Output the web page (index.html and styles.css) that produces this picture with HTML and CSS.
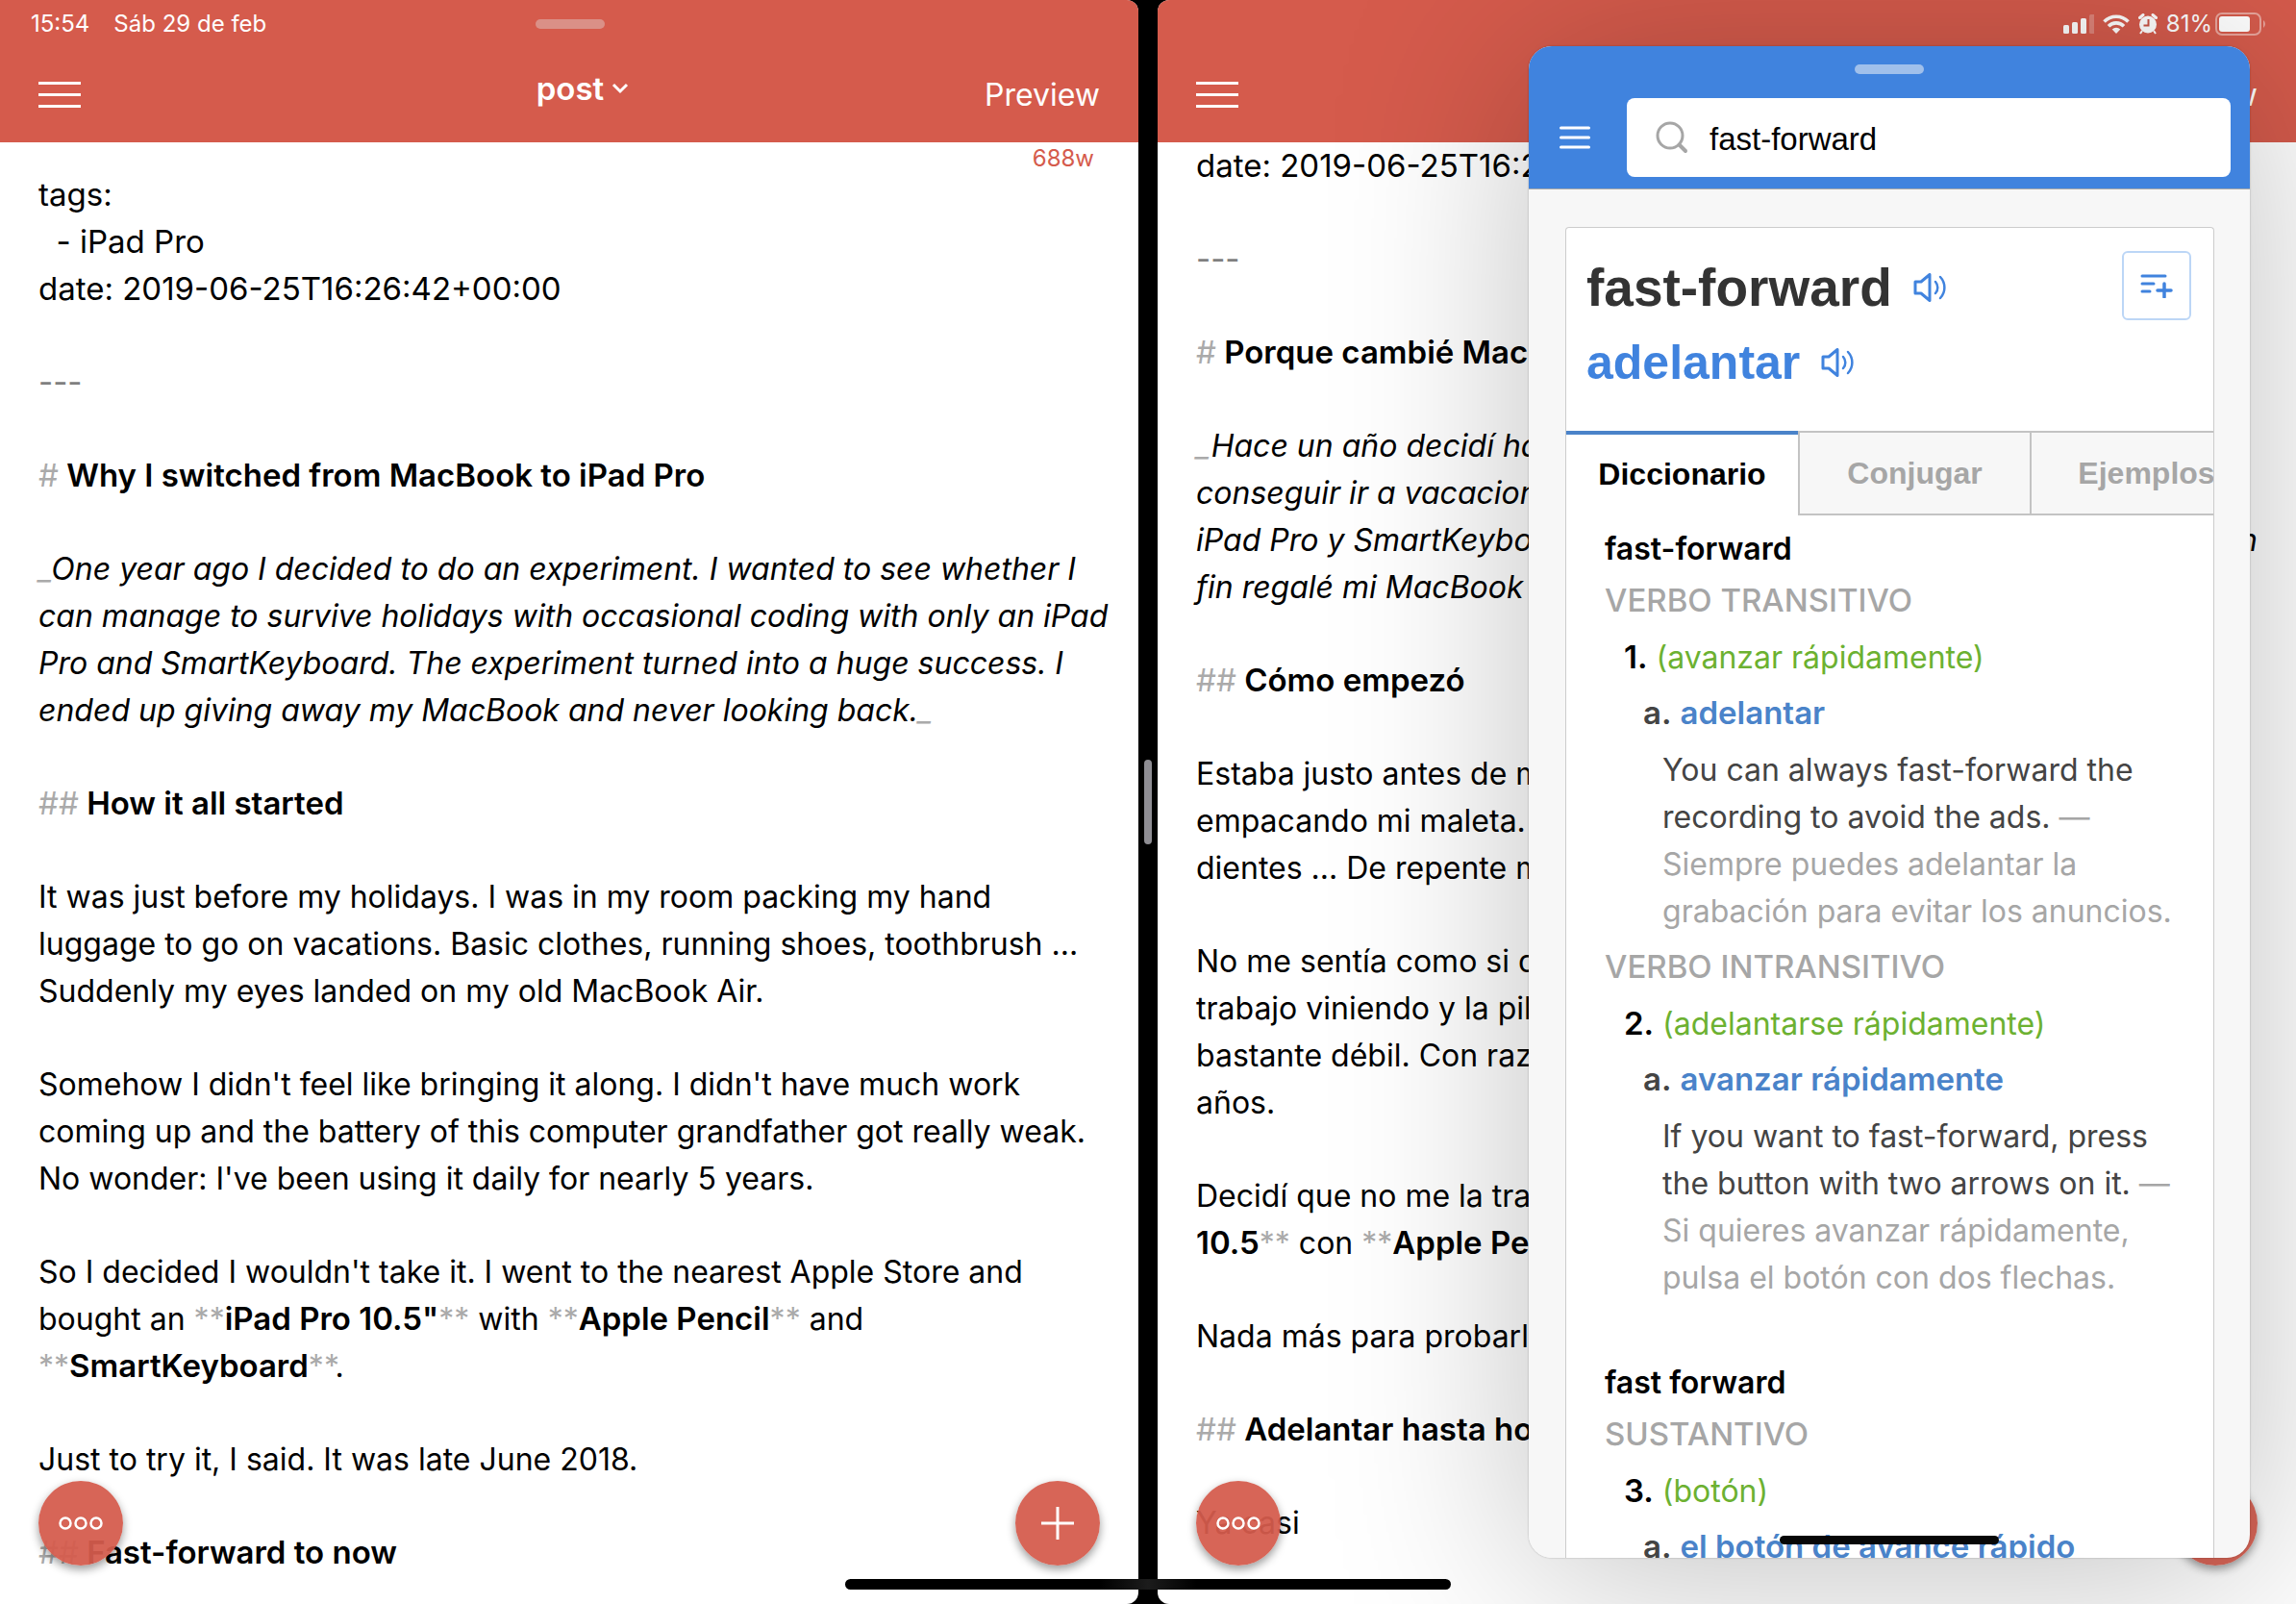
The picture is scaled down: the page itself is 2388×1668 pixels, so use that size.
FILE: index.html
```
<!DOCTYPE html>
<html lang="es">
<head>
<meta charset="utf-8">
<meta name="viewport" content="width=device-width, initial-scale=1">
<title>post</title>
<link rel="stylesheet" href="styles.css">
</head>
<body>
<main class="split">
  <section class="pane pane-left">
    <header class="pane-header">
      <div class="status">
        <div class="status-start"><span>15:54</span><span>Sáb 29 de feb</span></div>
        <span class="grabber"></span>
      </div>
      <nav class="toolbar">
        <button class="menu-button" type="button" aria-label="Menu">
          <svg width="44" height="28" viewBox="0 0 44 28"><path d="M0 2.500H44M0 14.500H44M0 26.500H44" stroke="#fff" stroke-width="3"/></svg>
        </button>
        <button class="doc-title" type="button">post
          <svg width="18" height="12" viewBox="0 0 18 12"><path d="M2 2l7 7 7-7" fill="none" stroke="#fff" stroke-width="3"/></svg>
        </button>
        <button class="preview" type="button">Preview</button>
      </nav>
    </header>
    <div class="editor">
      <span class="word-count">688w</span>
      <article class="document" lang="en">
        <p class="front">tags:
  - iPad Pro
date: 2019-06-25T16:26:42+00:00</p>
        <p class="rule">---</p>
        <h1><span class="mark">#</span> Why I switched from MacBook to iPad Pro</h1>
        <p><em><span class="mark">_</span>One year ago I decided to do an experiment. I wanted to see whether I
can manage to survive holidays with occasional coding with only an iPad
Pro and SmartKeyboard. The experiment turned into a huge success. I
ended up giving away my MacBook and never looking back.<span class="mark">_</span></em></p>
        <h2><span class="mark">##</span> How it all started</h2>
        <p>It was just before my holidays. I was in my room packing my hand
luggage to go on vacations. Basic clothes, running shoes, toothbrush ...
Suddenly my eyes landed on my old MacBook Air.</p>
        <p>Somehow I didn't feel like bringing it along. I didn't have much work
coming up and the battery of this computer grandfather got really weak.
No wonder: I've been using it daily for nearly 5 years.</p>
        <p>So I decided I wouldn't take it. I went to the nearest Apple Store and
bought an <span class="mark">**</span><strong>iPad Pro 10.5"</strong><span class="mark">**</span> with <span class="mark">**</span><strong>Apple Pencil</strong><span class="mark">**</span> and
<span class="mark">**</span><strong>SmartKeyboard</strong><span class="mark">**</span>.</p>
        <p>Just to try it, I said. It was late June 2018.</p>
        <h2><span class="mark">##</span> Fast-forward to now</h2>
      </article>
      <button class="fab fab-more" type="button" aria-label="More">
        <svg width="46" height="16" viewBox="0 0 46 16" fill="none" stroke="#fff" stroke-width="2.500"><circle cx="7" cy="8" r="5.500"/><circle cx="23" cy="8" r="5.500"/><circle cx="39" cy="8" r="5.500"/></svg>
      </button>
      <button class="fab fab-add" type="button" aria-label="Add">
        <svg width="34" height="34" viewBox="0 0 34 34"><path d="M17 0V34M0 17H34" stroke="#fff" stroke-width="3"/></svg>
      </button>
    </div>
  </section>

  <div class="divider"><span class="divider-handle"></span></div>

  <section class="pane pane-right">
    <header class="pane-header">
      <div class="status">
        <div class="status-end">
          <svg width="32" height="20" viewBox="0 0 32 20" fill="#fff"><rect y="11" width="6" height="9" rx="1.500"/><rect x="9" y="8" width="6" height="12" rx="1.500"/><rect x="18" y="4" width="6" height="16" rx="1.500"/><rect x="27" width="6" height="20" rx="1.500" opacity=".25"/></svg>
          <svg class="wifi" width="28" height="20" viewBox="0 0 28 20" fill="none" stroke="#fff" stroke-width="3.600"><path d="M1.500 7.500a17.500 17.500 0 0 1 25 0"/><path d="M6 12.200a11.300 11.300 0 0 1 16 0"/><path d="M14 20l-4.300-4.400a6 6 0 0 1 8.600 0z" fill="#fff" stroke="none"/></svg>
          <svg class="alarm" width="20" height="22" viewBox="0 0 20 22"><circle cx="10" cy="11.500" r="9" fill="#fff"/><path d="M1.500 4.500l3.500-3M18.500 4.500l-3.500-3" stroke="#fff" stroke-width="3" stroke-linecap="round"/><path d="M4 18l-2 3M16 18l2 3" stroke="#fff" stroke-width="2"/><path d="M10.500 6v6.500H5.500" fill="none" stroke="#c85546" stroke-width="2"/></svg>
          <span>81%</span>
          <svg class="battery" width="54" height="24" viewBox="0 0 54 24"><rect x="1" y="1" width="46" height="22" rx="6" fill="none" stroke="#fff" stroke-opacity=".45" stroke-width="2"/><rect x="4" y="4" width="32" height="16" rx="3" fill="#fff"/><path d="M50 8a5 5 0 0 1 0 8z" fill="#fff" opacity=".45"/></svg>
        </div>
      </div>
      <nav class="toolbar">
        <button class="menu-button" type="button" aria-label="Menú">
          <svg width="44" height="28" viewBox="0 0 44 28"><path d="M0 2.500H44M0 14.500H44M0 26.500H44" stroke="#fff" stroke-width="3"/></svg>
        </button>
        <span></span>
        <button class="preview" type="button">Preview</button>
      </nav>
    </header>
    <div class="editor">
      <article class="document">
        <p class="front">date: 2019-06-25T16:26:42+00:00</p>
        <p class="rule">---</p>
        <h1><span class="mark">#</span> Porque cambié MacBook</h1>
        <p><em><span class="mark">_</span>Hace un año decidí hacer
conseguir ir a vacaciones
<span class="spread"><span>iPad Pro y SmartKeyboard.</span><span>en</span></span>fin regalé mi MacBook</em></p>
        <h2><span class="mark">##</span> Cómo empezó</h2>
        <p>Estaba justo antes de mis
empacando mi maleta.
dientes ... De repente mis</p>
        <p>No me sentía como si que
trabajo viniendo y la pila
bastante débil. Con razón
años.</p>
        <p>Decidí que no me la traía
<strong>10.5</strong><span class="mark">**</span> con <span class="mark">**</span><strong>Apple Pencil</strong></p>
        <p>Nada más para probarlo</p>
        <h2><span class="mark">##</span> Adelantar hasta hoy</h2>
        <p>Ya casi</p>
      </article>
      <button class="fab fab-more" type="button" aria-label="Más">
        <svg width="46" height="16" viewBox="0 0 46 16" fill="none" stroke="#fff" stroke-width="2.500"><circle cx="7" cy="8" r="5.500"/><circle cx="23" cy="8" r="5.500"/><circle cx="39" cy="8" r="5.500"/></svg>
      </button>
      <button class="fab fab-add" type="button" aria-label="Añadir">
        <svg width="34" height="34" viewBox="0 0 34 34"><path d="M17 0V34M0 17H34" stroke="#fff" stroke-width="3"/></svg>
      </button>
    </div>
  </section>
</main>

<span class="home-indicator"></span>

<aside class="slideover">
  <div class="slideover-window">
    <header class="dict-header">
      <span class="grabber"></span>
      <div class="dict-bar">
        <button class="menu-button" type="button" aria-label="Menú">
          <svg width="32" height="24" viewBox="0 0 32 24"><path d="M1.500 2H30.500M1.500 12H30.500M1.500 22H30.500" stroke="#fff" stroke-width="3" stroke-linecap="round"/></svg>
        </button>
        <label class="search">
          <svg width="34" height="34" viewBox="0 0 34 34" fill="none" stroke="#a6a6a6" stroke-width="3"><circle cx="15" cy="15" r="13"/><path d="M24.500 24.500L31 31" stroke-width="4" stroke-linecap="round"/></svg>
          <input type="text" value="fast-forward" aria-label="Buscar">
        </label>
      </div>
    </header>
    <div class="dict-body">
      <article class="card">
        <div class="headline">
          <div class="words">
            <h1 class="word">fast-forward
              <button class="speak" type="button" aria-label="Escuchar fast-forward"><svg width="34" height="30" viewBox="0 0 34 30" fill="none" stroke="#4083de" stroke-width="3" stroke-linejoin="round"><path d="M2 9h6l9-7.500v27L8 21H2z"/><path d="M23 9a9 9 0 0 1 0 12M28 4a16 16 0 0 1 0 22" stroke-width="2.500" stroke-linecap="round"/></svg></button>
            </h1>
            <p class="translation">adelantar
              <button class="speak" type="button" aria-label="Escuchar adelantar"><svg width="34" height="30" viewBox="0 0 34 30" fill="none" stroke="#4083de" stroke-width="3" stroke-linejoin="round"><path d="M2 9h6l9-7.500v27L8 21H2z"/><path d="M23 9a9 9 0 0 1 0 12M28 4a16 16 0 0 1 0 22" stroke-width="2.500" stroke-linecap="round"/></svg></button>
            </p>
          </div>
          <button class="add-list" type="button" aria-label="Añadir a lista">
            <svg width="34" height="26" viewBox="0 0 34 26" fill="none" stroke="#4083de" stroke-width="3" stroke-linecap="round"><path d="M2 3H26M2 11H14M2 19H10"/><path d="M25 11V25M18 18H32" stroke-width="3.500"/></svg>
          </button>
        </div>
        <nav class="tabs">
          <a class="tab tab-active" href="#diccionario">Diccionario</a>
          <a class="tab" href="#conjugar">Conjugar</a>
          <a class="tab" href="#ejemplos">Ejemplos</a>
        </nav>
        <div class="entries">
          <section class="entry">
            <h2 class="headword">fast-forward</h2>
            <h3 class="pos">VERBO TRANSITIVO</h3>
            <p class="sense"><b>1.</b> <span class="context">(avanzar rápidamente)</span></p>
            <p class="meaning"><b>a.</b> <a href="#adelantar">adelantar</a></p>
            <p class="example">You can always fast-forward the<br>recording to avoid the ads. <span class="translated">—<br>Siempre puedes adelantar la<br>grabación para evitar los anuncios.</span></p>
            <h3 class="pos pos-next">VERBO INTRANSITIVO</h3>
            <p class="sense"><b>2.</b> <span class="context">(adelantarse rápidamente)</span></p>
            <p class="meaning"><b>a.</b> <a href="#avanzar">avanzar rápidamente</a></p>
            <p class="example">If you want to fast-forward, press<br>the button with two arrows on it. <span class="translated">—<br>Si quieres avanzar rápidamente,<br>pulsa el botón con dos flechas.</span></p>
          </section>
          <section class="entry">
            <h2 class="headword">fast forward</h2>
            <h3 class="pos">SUSTANTIVO</h3>
            <p class="sense"><b>3.</b> <span class="context">(botón)</span></p>
            <p class="meaning"><b>a.</b> <a href="#boton">el botón de avance rápido</a></p>
          </section>
        </div>
      </article>
    </div>
    <span class="slideover-indicator"></span>
  </div>
</aside>
</body>
</html>
```
FILE: styles.css
```
* {
  box-sizing: border-box;
}

html,
body {
  height: 100%;
}

body {
  margin: 0;
  position: relative;
  overflow: hidden;
  background: #000;
  color: #000;
  font-family: Inter, "Liberation Sans", sans-serif;
  font-size: 32px;
  line-height: 49px;
}

h1,
h2,
h3,
p {
  margin: 0;
  font-size: inherit;
  font-weight: inherit;
}

button {
  padding: 0;
  border: 0;
  background: none;
  color: inherit;
  font: inherit;
}

svg {
  display: block;
  flex: none;
}

strong,
b {
  font-size: 33px;
  font-weight: 600;
  line-height: 40px;
}

/* Split view */

.split {
  display: grid;
  grid-template-columns: 1fr 20px 1fr;
  height: 100%;
}

.pane {
  display: flex;
  flex-direction: column;
  min-width: 0;
  min-height: 0;
  overflow: hidden;
  background: #fff;
}

.pane-left {
  border-radius: 0 12px 12px 0;
}

.pane-right {
  border-radius: 12px 0 0 12px;
}

.divider {
  display: flex;
  align-items: center;
  justify-content: center;
}

.divider-handle {
  width: 8px;
  height: 88px;
  border-radius: 4px;
  background: #8e8d93;
}

/* Pane header */

.pane-header {
  flex: none;
  background: #d55b4c;
  color: #fff;
}

.status {
  display: grid;
  grid-template-columns: 1fr auto 1fr;
  align-items: center;
  height: 48px;
  padding: 0 30px 0 32px;
  font-size: 24px;
}

.status-start {
  display: flex;
  gap: 25px;
}

.status-end {
  grid-column: 3;
  display: flex;
  align-items: center;
  justify-content: flex-end;
  gap: 9px;
}

.battery {
  margin-left: -6px;
}

.grabber {
  width: 72px;
  height: 10px;
  border-radius: 5px;
  background: rgba(224, 224, 224, .4);
}

.toolbar {
  display: grid;
  grid-template-columns: 1fr auto 1fr;
  align-items: center;
  height: 100px;
  padding: 0 40px;
}

.menu-button {
  justify-self: start;
}

.doc-title {
  display: flex;
  align-items: center;
  gap: 8px;
  padding: 0 0 12px 28px;
  font-size: 33px;
  font-weight: 600;
}

.preview {
  justify-self: end;
}

/* Editor */

.editor {
  position: relative;
  flex: 1;
  min-height: 0;
  overflow: hidden;
}

.document {
  display: flex;
  flex-direction: column;
  gap: 48px;
  padding: 0 40px;
  white-space: pre;
}

.pane-left .document {
  padding-top: 30px;
}

.document h1,
.document h2 {
  font-size: 33px;
  font-weight: 600;
}

.mark {
  color: #aaa;
  font-weight: 400;
}

.front,
.rule {
  font-size: 33px;
}

.rule {
  color: #808080;
}

.spread {
  display: flex;
  justify-content: space-between;
}

.word-count {
  position: absolute;
  top: 0;
  right: 46px;
  color: #d55b4c;
  font-size: 24px;
  line-height: 34px;
}

.fab {
  position: absolute;
  bottom: 40px;
  display: flex;
  align-items: center;
  justify-content: center;
  width: 88px;
  height: 88px;
  border-radius: 50%;
  background: rgba(213, 91, 76, .94);
  box-shadow: 0 4px 10px rgba(0, 0, 0, .4);
}

.fab-more {
  left: 40px;
}

.fab-add {
  right: 40px;
}

.home-indicator {
  position: absolute;
  bottom: 15px;
  left: 50%;
  width: 630px;
  height: 11px;
  margin-left: -315px;
  border-radius: 6px;
  background: linear-gradient(90deg, #000 42%, #1c1c1c 50%, #000 58%);
}

/* Slide-over window */

.slideover {
  position: absolute;
  top: 48px;
  right: 48px;
  bottom: 48px;
  width: 750px;
  border-radius: 24px;
  box-shadow: 0 16px 200px rgba(0, 0, 0, .25), 0 0 2px rgba(0, 0, 0, .3);
}

.slideover-window {
  display: flex;
  flex-direction: column;
  position: relative;
  height: 100%;
  overflow: hidden;
  border-radius: 24px;
  background: #f7f7f7;
}

.dict-header {
  flex: none;
  display: flex;
  flex-direction: column;
  align-items: center;
  padding: 19px 20px 12px 32px;
  border-bottom: 1px solid #a9a9a9;
  background: #4083de;
}

.dict-header .grabber {
  margin-right: 12px;
  background: #a0c0eb;
}

.dict-bar {
  display: flex;
  align-items: center;
  gap: 38px;
  width: 100%;
  margin-top: 25px;
}

.search {
  flex: 1;
  display: flex;
  align-items: center;
  gap: 22px;
  height: 82px;
  padding: 0 30px;
  border-radius: 8px;
  background: #fff;
}

.search input {
  flex: 1;
  min-width: 0;
  padding: 4px 0 0;
  border: 0;
  outline: 0;
  background: none;
  color: #000;
  font: 33px "Liberation Sans", Arial, sans-serif;
}

.dict-body {
  flex: 1;
  min-height: 0;
  padding: 39px 37px 0 38px;
}

.card {
  height: 100%;
  overflow: hidden;
  border: 1px solid #ccc;
  border-bottom: 0;
  border-radius: 4px 4px 0 0;
  background: #fff;
}

.headline {
  display: flex;
  align-items: flex-start;
  justify-content: space-between;
  height: 211px;
  padding: 24px 23px 0 21px;
  font-family: "Liberation Sans", Arial, sans-serif;
  font-weight: 700;
}

.words {
  display: flex;
  flex-direction: column;
  gap: 2px;
}

.word,
.translation {
  display: flex;
  align-items: center;
  gap: 22px;
  line-height: 76px;
}

.word {
  color: #333;
  font-size: 55px;
}

.translation {
  color: #4083de;
  font-size: 50px;
}

.add-list {
  display: flex;
  align-items: center;
  justify-content: center;
  width: 72px;
  height: 72px;
  border: 2px solid #bcd6f6;
  border-radius: 6px;
}

.tabs {
  display: flex;
  font: 700 32px/84px "Liberation Sans", Arial, sans-serif;
}

.tab {
  flex: none;
  width: 241px;
  height: 88px;
  border: solid #c3c3c3;
  border-width: 2px 0 2px 2px;
  background: #f7f7f7;
  color: #a6a6a6;
  text-align: center;
  text-decoration: none;
}

.tab-active {
  border-width: 4px 0 0;
  border-color: #4a83c9;
  background: #fff;
  color: #000;
  line-height: 82px;
}

/* Dictionary entries */

.entries {
  padding: 10px 0 0 40px;
  white-space: nowrap;
}

.entry + .entry {
  margin-top: 60px;
}

.headword {
  font-weight: 600;
}

.pos {
  margin-top: 5px;
  color: #a6a6a6;
  font-size: 33px;
  font-weight: 500;
}

.pos-next {
  margin-top: 9px;
}

.sense {
  margin-top: 10px;
  padding-left: 20px;
}

.context {
  color: #6cb131;
}

.meaning {
  margin-top: 9px;
  padding-left: 40px;
}

.meaning b,
.example {
  color: #444;
}

.meaning a {
  color: #4a83c9;
  font-size: 33px;
  font-weight: 600;
  line-height: 40px;
  text-decoration: none;
}

.example {
  margin-top: 10px;
  padding-left: 60px;
}

.translated {
  color: #a6a6a6;
}

.slideover-indicator {
  position: absolute;
  bottom: 14px;
  left: 50%;
  width: 228px;
  height: 9px;
  margin-left: -114px;
  border-radius: 5px;
  background: #070707;
}
```
